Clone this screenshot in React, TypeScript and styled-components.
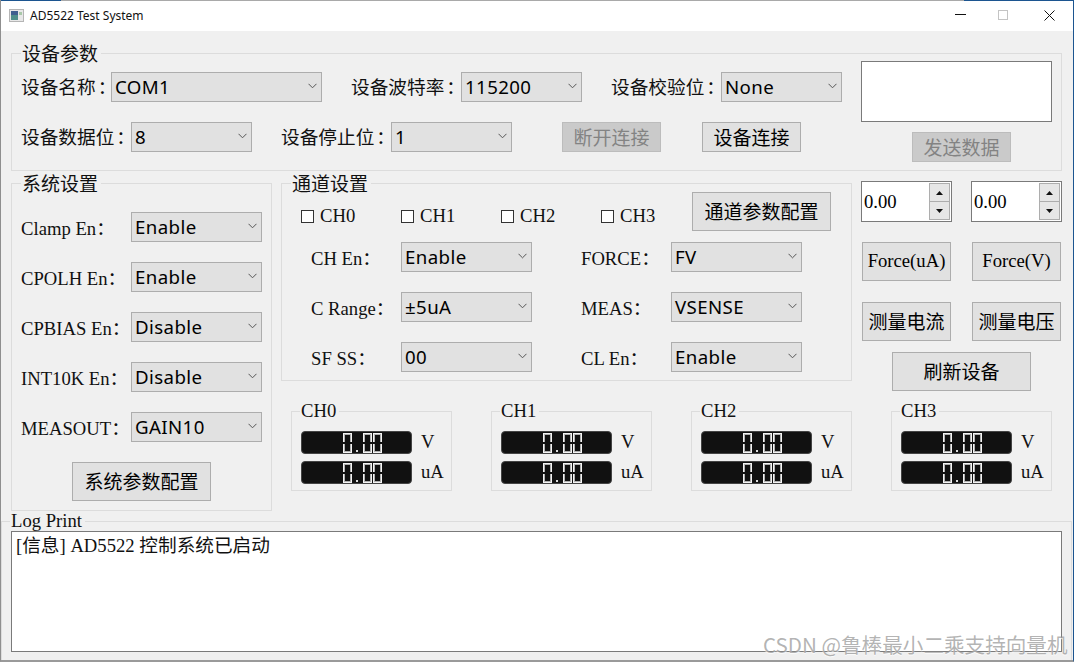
import React from "react"
import styled, { createGlobalStyle } from "styled-components"

const SANS = `"Noto Sans", "Noto Sans CJK SC", sans-serif`
const CJK = `"Noto Sans CJK SC", "Noto Sans", sans-serif`
const SERIF = `"Liberation Serif", "Noto Sans CJK SC", serif`
const SIZE = "18.67px"

const GlobalStyle = createGlobalStyle`
  html, body {
    margin: 0;
    padding: 0;
    background: #f0f0f0;
  }
  * {
    box-sizing: border-box;
  }
`

const Window = styled.div`
  position: relative;
  width: 1074px;
  height: 662px;
  overflow: hidden;
  background: #f0f0f0;
  border-left: 1px solid #8f8f8f;
  border-right: 1px solid #1c5590;
  border-bottom: 2px solid #9a9a9a;
`

const TopEdge = styled.div`
  height: 1px;
  background: linear-gradient(to right, #1c5590 60px, #a9a9a9 60px, #a9a9a9 963px, #1c5590 963px);
`

const TitleBar = styled.div`
  height: 30px;
  background: #fff;
  display: flex;
  align-items: center;
  padding: 0 0 2px 8px;
`

const TitleText = styled.span`
  margin-left: 6px;
  font: 12px ${SANS};
  color: #111;
`

const WindowControls = styled.div`
  margin-left: auto;
  display: flex;
  height: 100%;
  padding-right: 1px;
`

const ControlButton = styled.div<{ $nudge?: number }>`
  width: 46px;
  padding-left: ${p => p.$nudge ?? 0}px;
  display: flex;
  align-items: center;
  justify-content: center;
`

const Group = styled.div<{ $w: number; $h: number }>`
  position: relative;
  flex: none;
  width: ${p => p.$w}px;
  height: ${p => p.$h}px;
  border: 1px solid #dcdcdc;
`

const GroupTitle = styled.span<{ $serif?: boolean }>`
  position: absolute;
  left: ${p => (p.$serif ? 8 : 9)}px;
  top: 0;
  transform: translateY(calc(-50% - 1px));
  padding: 0 3px 0 1px;
  background: #f0f0f0;
  line-height: 20px;
  font-size: ${p => (p.$serif ? SIZE : "19px")};
  font-family: ${p => (p.$serif ? SERIF : CJK)};
  color: #111;
  white-space: nowrap;
`

const DeviceGroup = styled(Group)`
  margin: 22px 0 0 10px;
  display: flex;
  gap: 19px;
  padding-left: 9px;
`

const DeviceForm = styled.div`
  padding-top: 18px;
  display: flex;
  flex-direction: column;
  gap: 20px;
`

const Row = styled.div<{ $gap?: number }>`
  display: flex;
  align-items: center;
  gap: ${p => p.$gap ?? 29}px;
`

const FieldBox = styled.div`
  height: 30px;
  display: flex;
  align-items: center;
`

const FieldLabel = styled.span<{ $w: number; $serif?: boolean }>`
  flex: none;
  width: ${p => p.$w}px;
  margin-bottom: ${p => (p.$serif ? 2 : 4)}px;
  font-size: ${SIZE};
  font-family: ${p => (p.$serif ? SERIF : CJK)};
  color: #111;
  white-space: nowrap;
`

const Colon = styled.span<{ $serif?: boolean }>`
  margin-left: ${p => (p.$serif ? 0 : 2)}px;
`

const Combo = styled.div<{ $w: number }>`
  flex: none;
  width: ${p => p.$w}px;
  height: 30px;
  padding: 0 4px 2px 3px;
  display: flex;
  align-items: center;
  justify-content: space-between;
  background: #e1e1e1;
  border: 1px solid #adadad;
  font: ${SIZE} ${SANS};
  letter-spacing: 0.4px;
  color: #000;
`

const PushButton = styled.button<{ $w?: number; $h?: number; $serif?: boolean }>`
  flex: none;
  width: ${p => p.$w ?? 99}px;
  height: ${p => p.$h ?? 39}px;
  padding: 0 0 2px;
  background: #e1e1e1;
  border: 1px solid #adadad;
  border-radius: 0;
  font-size: ${p => (p.$serif ? SIZE : "19px")};
  font-family: ${p => (p.$serif ? SERIF : CJK)};
  color: #000;
  white-space: nowrap;

  &:disabled {
    background: #cacaca;
    border-color: #bcbcbc;
    color: #838383;
  }
`

const DisconnectButton = styled(PushButton)`
  margin-left: 21px;
`

const SendColumn = styled.div`
  padding-top: 7px;
  display: flex;
  flex-direction: column;
  gap: 10px;
`

const SendButton = styled(PushButton)`
  margin-left: 51px;
`

const TextBox = styled.div`
  width: 191px;
  height: 61px;
  background: #fff;
  border: 1px solid #7a7a7a;
`

const MainRow = styled.div`
  margin: 10px 0 0 10px;
  display: flex;
  gap: 9px;
`

const SystemGroup = styled(Group)`
  margin-top: 2px;
  padding: 28px 0 0 9px;
  display: flex;
  flex-direction: column;
  gap: 20px;
`

const CenteredButton = styled(PushButton)`
  margin-left: 51px;
`

const RightArea = styled.div`
  display: flex;
  flex-direction: column;
  gap: 20px;
`

const UpperRow = styled.div`
  display: flex;
  gap: 9px;
`

const ChannelGroup = styled(Group)`
  margin-top: 2px;
  padding: 8px 0 0 19px;
  display: flex;
  flex-direction: column;
  gap: 20px;
`

const ChannelHead = styled.div`
  display: grid;
  grid-template-columns: 100px 100px 100px 91px auto;
  height: 30px;
  margin-bottom: -1px;
`

const CheckItem = styled.label`
  display: flex;
  align-items: center;
  gap: 6px;
  height: 30px;
  padding-top: 18px;
  font: ${SIZE} ${SERIF};
  color: #111;
`

const CheckBox = styled.span`
  width: 13px;
  height: 13px;
  background: #fff;
  border: 1px solid #333;
`

const ChannelRows = styled.div`
  margin: 1px 0 0 10px;
  display: flex;
  flex-direction: column;
  gap: 20px;
`

const Controls = styled.div`
  display: grid;
  grid-template-columns: 91px 91px;
  column-gap: 19px;
  justify-items: center;
  align-content: start;
`

const SpinBox = styled.div`
  width: 91px;
  height: 41px;
  margin-bottom: 20px;
  padding: 1px 1px 1px 2px;
  display: flex;
  align-items: center;
  justify-content: space-between;
  background: #fff;
  border: 1px solid #7a7a7a;
  font: ${SIZE} ${SERIF};
  color: #000;
`

const SpinArrows = styled.div`
  width: 21px;
  height: 37px;
  display: flex;
  flex-direction: column;
`

const SpinArrow = styled.div`
  flex: 1;
  display: flex;
  align-items: center;
  justify-content: center;
  background: #e6e6e6;
  border: 1px solid #adadad;

  & + & {
    border-top: 0;
  }
`

const ForceButton = styled(PushButton)`
  margin-bottom: 21px;
`

const CurrentButton = styled(PushButton)`
  margin-bottom: 11px;
`

const RefreshButton = styled(PushButton)`
  grid-column: 1 / 3;
`

const MeterRow = styled.div`
  margin-left: 10px;
  display: grid;
  grid-template-columns: repeat(4, 161px);
  column-gap: 39px;
`

const MeterBox = styled(Group)`
  padding: 19px 0 0 9px;
  display: flex;
  flex-direction: column;
  gap: 7px;
`

const MeterLine = styled.div`
  height: 23px;
  display: flex;
  align-items: center;
  gap: 9px;
`

const MeterUnit = styled.span`
  margin-bottom: 2px;
  font: ${SIZE} ${SERIF};
  color: #111;
`

const Lcd = styled.div`
  width: 111px;
  height: 23px;
  padding-right: 29px;
  display: flex;
  align-items: center;
  justify-content: flex-end;
  background: #111;
  border: 1px solid #444;
  border-radius: 4px;
`

/* the value stays in the DOM, the segments are drawn by the borders */
const LcdDigit = styled.span`
  position: relative;
  width: 9px;
  height: 20px;
  margin-left: 1px;
  border: 1px solid #f4f4f4;
  box-shadow: inset 0 0 0 1px #b0b0b0;
  color: transparent;
  font: 9px ${SANS};

  &::after {
    content: "";
    position: absolute;
    left: -1px;
    right: -1px;
    top: 8px;
    height: 2px;
    background: #111;
  }
`

const LcdDot = styled.span`
  position: relative;
  width: 10px;
  height: 20px;
  color: transparent;
  font: 9px ${SANS};

  &::after {
    content: "";
    position: absolute;
    left: 4px;
    bottom: 1px;
    width: 2px;
    height: 2px;
    background: #dcdcdc;
  }
`

const LogGroup = styled(Group)`
  margin-top: 10px;
  padding: 9px 0 0 9px;
`

const LogArea = styled.div`
  width: 1051px;
  height: 121px;
  padding: 3px 4px;
  background: #fff;
  border: 1px solid #7a7a7a;
  font: ${SIZE}/22px ${SERIF};
  color: #111;
`

const Watermark = styled.span`
  position: absolute;
  left: 762px;
  top: 631px;
  font: 20.6px/26px ${CJK};
  color: rgba(130, 130, 130, 0.6);
  text-shadow: 0 1px 1px rgba(255, 255, 255, 0.8);
  white-space: nowrap;
`

const Chevron = () => (
  <svg width="9" height="6" viewBox="0 0 9 6">
    <path d="M0.5 0.8 L4.5 4.8 L8.5 0.8" fill="none" stroke="#555" strokeWidth="1" />
  </svg>
)

const Field = ({ label, value, labelW, w, serif }: { label: string; value: string; labelW: number; w: number; serif?: boolean }) => (
  <FieldBox>
    <FieldLabel $w={labelW} $serif={serif}>
      {label}
      <Colon $serif={serif}>：</Colon>
    </FieldLabel>
    <Combo $w={w}>
      {value}
      <Chevron />
    </Combo>
  </FieldBox>
)

const Spin = () => (
  <SpinBox>
    0.00
    <SpinArrows>
      <SpinArrow>
        <svg width="7" height="4" viewBox="0 0 7 4"><path d="M3.5 0 L7 4 H0 Z" fill="#111" /></svg>
      </SpinArrow>
      <SpinArrow>
        <svg width="7" height="4" viewBox="0 0 7 4"><path d="M0 0 H7 L3.5 4 Z" fill="#111" /></svg>
      </SpinArrow>
    </SpinArrows>
  </SpinBox>
)

const LcdValue = () => (
  <Lcd>
    <LcdDigit>0</LcdDigit>
    <LcdDot>.</LcdDot>
    <LcdDigit>0</LcdDigit>
    <LcdDigit>0</LcdDigit>
  </Lcd>
)

const systemRows = [
  ["Clamp En", "Enable"],
  ["CPOLH En", "Enable"],
  ["CPBIAS En", "Disable"],
  ["INT10K En", "Disable"],
  ["MEASOUT", "GAIN10"],
]

const channelRows = [
  ["CH En", "Enable", "FORCE", "FV"],
  ["C Range", "±5uA", "MEAS", "VSENSE"],
  ["SF SS", "00", "CL En", "Enable"],
]

const channels = ["CH0", "CH1", "CH2", "CH3"]

export default function App() {
  return (
    <>
      <GlobalStyle />
      <Window>
        <TopEdge />
        <TitleBar>
          <svg width="15" height="13" viewBox="0 0 15 13">
            <rect x="0.5" y="0.5" width="14" height="12" fill="#e8e8e8" stroke="#b5b5b5" />
            <rect x="2" y="2" width="7" height="9" fill="#4f8f8a" />
            <rect x="2" y="2" width="7" height="4" fill="#3f5f8f" />
            <rect x="10" y="3" width="3" height="3" fill="#a9c8a9" />
          </svg>
          <TitleText>AD5522 Test System</TitleText>
          <WindowControls>
            <ControlButton $nudge={8}>
              <svg width="12" height="2" viewBox="0 0 12 2"><rect width="11" height="1" fill="#111" /></svg>
            </ControlButton>
            <ControlButton>
              <svg width="10" height="10" viewBox="0 0 10 10"><rect x="0.5" y="0.5" width="9" height="9" fill="none" stroke="#c4c4c4" /></svg>
            </ControlButton>
            <ControlButton>
              <svg width="11" height="11" viewBox="0 0 11 11"><path d="M0.5 0.5 L10.5 10.5 M10.5 0.5 L0.5 10.5" stroke="#111" strokeWidth="1" /></svg>
            </ControlButton>
          </WindowControls>
        </TitleBar>

        <DeviceGroup $w={1051} $h={118}>
          <GroupTitle>设备参数</GroupTitle>
          <DeviceForm>
            <Row>
              <Field label="设备名称" value="COM1" labelW={90} w={211} />
              <Field label="设备波特率" value="115200" labelW={110} w={121} />
              <Field label="设备校验位" value="None" labelW={110} w={121} />
            </Row>
            <Row>
              <Field label="设备数据位" value="8" labelW={110} w={121} />
              <Field label="设备停止位" value="1" labelW={110} w={121} />
              <Row $gap={41}>
                <DisconnectButton $h={30} disabled>断开连接</DisconnectButton>
                <PushButton $h={30}>设备连接</PushButton>
              </Row>
            </Row>
          </DeviceForm>
          <SendColumn>
            <TextBox />
            <SendButton $h={30} disabled>发送数据</SendButton>
          </SendColumn>
        </DeviceGroup>

        <MainRow>
          <SystemGroup $w={261} $h={328}>
            <GroupTitle>系统设置</GroupTitle>
            {systemRows.map(([label, value]) => (
              <Field key={label} label={label} value={value} labelW={110} w={131} serif />
            ))}
            <CenteredButton $w={139}>系统参数配置</CenteredButton>
          </SystemGroup>

          <RightArea>
            <UpperRow>
              <ChannelGroup $w={571} $h={198}>
                <GroupTitle>通道设置</GroupTitle>
                <ChannelHead>
                  {channels.map(ch => (
                    <CheckItem key={ch}>
                      <CheckBox />
                      {ch}
                    </CheckItem>
                  ))}
                  <PushButton $w={139}>通道参数配置</PushButton>
                </ChannelHead>
                <ChannelRows>
                  {channelRows.map(([l1, v1, l2, v2]) => (
                    <Row key={l1} $gap={49}>
                      <Field label={l1} value={v1} labelW={90} w={131} serif />
                      <Field label={l2} value={v2} labelW={90} w={131} serif />
                    </Row>
                  ))}
                </ChannelRows>
              </ChannelGroup>

              <Controls>
                <Spin />
                <Spin />
                <ForceButton $w={89} $serif>Force(uA)</ForceButton>
                <ForceButton $w={89} $serif>Force(V)</ForceButton>
                <CurrentButton $w={89}>测量电流</CurrentButton>
                <CurrentButton $w={89}>测量电压</CurrentButton>
                <RefreshButton $w={139}>刷新设备</RefreshButton>
              </Controls>
            </UpperRow>

            <MeterRow>
              {channels.map(ch => (
                <MeterBox key={ch} $w={161} $h={80}>
                  <GroupTitle $serif>{ch}</GroupTitle>
                  <MeterLine>
                    <LcdValue />
                    <MeterUnit>V</MeterUnit>
                  </MeterLine>
                  <MeterLine>
                    <LcdValue />
                    <MeterUnit>uA</MeterUnit>
                  </MeterLine>
                </MeterBox>
              ))}
            </MeterRow>
          </RightArea>
        </MainRow>

        <LogGroup $w={1071} $h={140}>
          <GroupTitle $serif>Log Print</GroupTitle>
          <LogArea>[信息] AD5522 控制系统已启动</LogArea>
        </LogGroup>

        <Watermark>CSDN @鲁棒最小二乘支持向量机</Watermark>
      </Window>
    </>
  )
}
